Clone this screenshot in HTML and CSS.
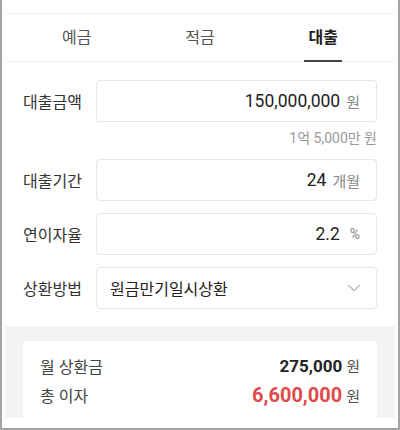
FILE: index.html
```html
<!DOCTYPE html>
<html lang="ko">
<head>
    <meta charset="UTF-8">
    <meta name="viewport" content="width=device-width, initial-scale=1.0">
    <title>대출 계산기</title>
    <link rel="stylesheet" href="styles.css">
</head>
<body>
    <div class="frame">
        <div class="screen">
            <nav class="tabs">
                <div class="tab">예금</div>
                <div class="tab">적금</div>
                <div class="tab active">대출</div>
            </nav>

            <div class="form">
                <div class="field">
                    <label class="field-label">대출금액</label>
                    <div class="field-box">
                        <span class="value">150,000,000</span>
                        <span class="unit">원</span>
                    </div>
                </div>
                <p class="hint">1억 5,000만 원</p>

                <div class="field">
                    <label class="field-label">대출기간</label>
                    <div class="field-box">
                        <span class="value">24</span>
                        <span class="unit">개월</span>
                    </div>
                </div>

                <div class="field">
                    <label class="field-label">연이자율</label>
                    <div class="field-box">
                        <span class="value">2.2</span>
                        <span class="unit unit-pct">%</span>
                    </div>
                </div>

                <div class="field">
                    <label class="field-label">상환방법</label>
                    <div class="field-box select">
                        <span class="select-text">원금만기일시상환</span>
                        <svg class="chevron" width="14" height="8" viewBox="0 0 14 8">
                            <path d="M1 1 L7 6.5 L13 1" fill="none" stroke="#bdbdbd" stroke-width="1.4"/>
                        </svg>
                    </div>
                </div>
            </div>

            <div class="summary">
                <div class="summary-card">
                    <div class="summary-row">
                        <span class="summary-label">월 상환금</span>
                        <span class="summary-value"><b class="amount">275,000</b> <span class="unit">원</span></span>
                    </div>
                    <div class="summary-row">
                        <span class="summary-label">총 이자</span>
                        <span class="summary-value"><b class="amount red">6,600,000</b> <span class="unit">원</span></span>
                    </div>
                </div>
            </div>
        </div>
    </div>
</body>
</html>
```

FILE: styles.css
```css
* {
    box-sizing: border-box;
}

body {
    margin: 0;
    font-family: Roboto, "Noto Sans CJK KR", sans-serif;
    background-color: #fff;
    color: #222;
}

.frame {
    width: 400px;
    height: 430px;
    padding: 13px 3px 10px;
    border: 2px solid #a4a4a4;
    border-top: none;
}

.screen {
    height: 100%;
    overflow: hidden;
}

.tabs {
    display: grid;
    grid-template-columns: repeat(3, 1fr);
    padding: 0 10px;
    border-top: 1px solid #eeeeee;
    border-bottom: 1px solid #eeeeee;
}

.tab {
    position: relative;
    height: 47px;
    line-height: 47px;
    text-align: center;
    font-size: 16px;
    color: #555;
}

.tab.active {
    color: #1e1e1e;
    font-weight: bold;
}

.tab.active::after {
    content: "";
    position: absolute;
    left: 50%;
    bottom: -1px;
    width: 38px;
    height: 2px;
    margin-left: -19px;
    background-color: #444;
}

.form {
    padding: 18px 18px 17px;
}

.field {
    display: flex;
    align-items: center;
    margin-bottom: 12px;
}

.field-label {
    width: 73px;
    font-size: 16px;
    color: #333;
}

.field-box {
    flex: 1;
    height: 42px;
    display: flex;
    align-items: center;
    justify-content: flex-end;
    gap: 6px;
    padding: 0 16px;
    border: 1px solid #e6e6e6;
    border-radius: 4px;
}

.value {
    font-size: 17.5px;
    color: #222;
}

.unit {
    font-size: 15px;
    color: #888;
}

.unit-pct {
    font-size: 14px;
    margin-left: 4px;
}

.hint {
    margin: -4px 0 13px;
    text-align: right;
    font-size: 14px;
    line-height: 16px;
    color: #999;
}

.select {
    justify-content: space-between;
    padding: 0 15px 0 13px;
}

.select-text {
    font-size: 16px;
    color: #222;
}

.field:last-child {
    margin-bottom: 0;
}

.summary {
    background-color: #f3f3f3;
    padding: 15px 18px;
}

.summary-card {
    background-color: #fff;
    padding: 10px 17px 12px;
}

.summary-row {
    display: flex;
    justify-content: space-between;
    align-items: center;
    height: 29px;
}

.summary-label {
    font-size: 16px;
    color: #444;
}

.amount {
    font-size: 17px;
    color: #222;
}

.amount.red {
    font-size: 20px;
    color: #e04a4a;
}

.summary-value .unit {
    color: #555;
}
```
